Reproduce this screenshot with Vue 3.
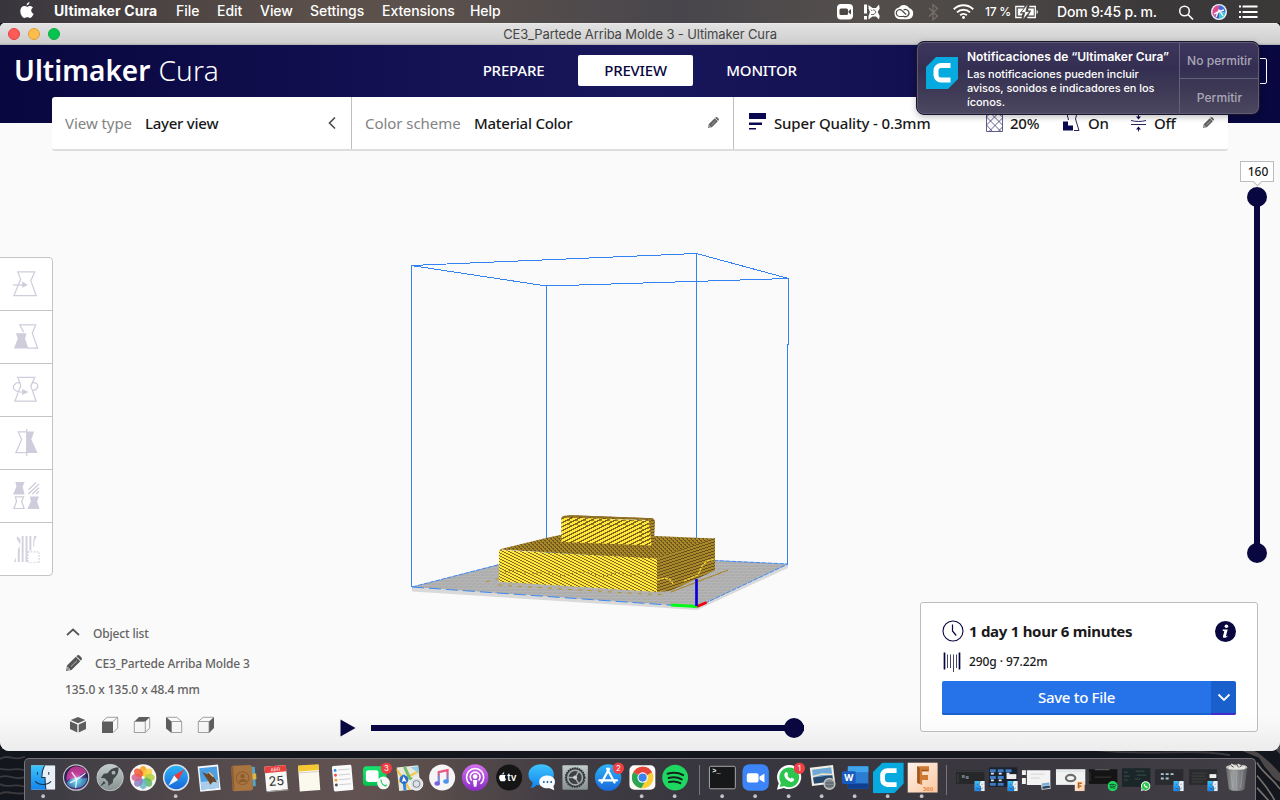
<script setup>
const menus = ['File', 'Edit', 'View', 'Settings', 'Extensions', 'Help']

const petals = ['#f9a11b', '#f8d13a', '#b5cf3c', '#5fb95c', '#6bb7c9', '#8c7fc4', '#d4608f', '#ee5a3b']

const previews = [
  { kind: 'dark', badge: 'finder' },
  { kind: 'grid', badge: 'finder' },
  { kind: 'doc', badge: 'photo' },
  { kind: 'ring', badge: 'fusion' },
  { kind: 'black', badge: 'spotify' },
  { kind: 'chat', badge: 'whatsapp' },
  { kind: 'icons', badge: 'finder' },
  { kind: 'list', badge: 'finder' },
]
</script>

<template>
  <div class="desktop">
    <svg class="defs" width="0" height="0">
      <defs>
        <linearGradient id="gBlue" x1="0" y1="0" x2="0" y2="1"><stop offset="0" stop-color="#3fc4fb" /><stop offset="1" stop-color="#1284ee" /></linearGradient>
        <linearGradient id="gSafari" x1="0" y1="0" x2="0" y2="1"><stop offset="0" stop-color="#2bb3f6" /><stop offset="1" stop-color="#1a68dc" /></linearGradient>
        <linearGradient id="gGreen" x1="0" y1="0" x2="0" y2="1"><stop offset="0" stop-color="#16e36f" /><stop offset="1" stop-color="#03c24f" /></linearGradient>
        <linearGradient id="gMusic" x1="0" y1="0" x2="0" y2="1"><stop offset="0" stop-color="#fb4d76" /><stop offset="1" stop-color="#3da5f2" /></linearGradient>
        <linearGradient id="gPod" x1="0" y1="0" x2="0" y2="1"><stop offset="0" stop-color="#d370ee" /><stop offset="1" stop-color="#8a2cc4" /></linearGradient>
        <linearGradient id="gSilver" x1="0" y1="0" x2="0" y2="1"><stop offset="0" stop-color="#c2cccb" /><stop offset="1" stop-color="#85908f" /></linearGradient>
        <linearGradient id="gFusion" x1="0" y1="0" x2="1" y2="1"><stop offset="0" stop-color="#fff3ea" /><stop offset="1" stop-color="#fbc7a1" /></linearGradient>
        <linearGradient id="gTrash" x1="0" y1="0" x2="1" y2="0"><stop offset="0" stop-color="#656769" /><stop offset=".35" stop-color="#a6a9aa" /><stop offset="1" stop-color="#5d5f61" /></linearGradient>
        <radialGradient id="gSiri" cx=".5" cy=".6" r=".6"><stop offset="0" stop-color="#fff" /><stop offset=".2" stop-color="#a9c4ef" /><stop offset=".5" stop-color="#5a3c8e" /><stop offset=".8" stop-color="#2b2156" /><stop offset="1" stop-color="#1b1538" /></radialGradient>
        <symbol id="finder" viewBox="0 0 26 26">
          <rect width="26" height="26" rx="1" fill="#e9eff6" />
          <path d="M0 0h14.5c-2 4-3 8-3 13h3.500c0 5 .5 9 1 13H0z" fill="url(#gBlue)" />
          <path d="M7 7v3M19 7v3M4.500 17c4.500 4.500 12.500 4.500 17 0M14.500 0c-2 4-3 8-3 13H15c0 5 .5 9 1 13" fill="none" stroke="#17304d" stroke-width="1.100" />
        </symbol>
        <symbol id="phone" viewBox="0 0 16 16"><path d="M4 2.500c1.500-1 2 .2 2.700 2 .4 1-.8 1.500-.4 2.300.7 1.300 1.600 2.200 3 2.800.8.300 1.300-1.100 2.300-.6 1.900.9 2.700 1.300 1.800 2.700C11.500 15 7.500 13 5 10.500S1.500 4.500 4 2.500z" fill="#fff" /></symbol>
        <symbol id="whatsapp" viewBox="0 0 28 28"><path d="M1 27l2-7A12.800 12.800 0 1 1 8.500 25z" fill="#fff" /><path d="M4 24l1.200-4.600A10.500 10.500 0 1 1 9 23z" fill="#2cc64f" /><use href="#phone" x="6.500" y="6" width="15" height="15" /></symbol>
        <symbol id="spotify" viewBox="0 0 28 28"><circle cx="14" cy="14" r="13.700" fill="#1ed760" /><path d="M6 10c6-1.800 11.500-1.200 16.500 1.400M7 14.500c5-1.400 10-.8 14 1.400M7.500 18.700c4.500-1.100 8.500-.6 12 1.300" fill="none" stroke="#12251b" stroke-width="2.100" stroke-linecap="round" /></symbol>
        <symbol id="fusion" viewBox="0 0 31 31"><rect width="31" height="31" fill="url(#gFusion)" /><path d="M10 4h12v5h-7v4h6v5h-6v5l-5-2z" fill="#cf7a33" /><path d="M10 4l2.500 2v16l-2.500-1zM15 9h7l-2-1.500h-6z" fill="#9c5420" /></symbol>
        <symbol id="photo" viewBox="0 0 26 26"><rect x="2" y="3" width="23" height="18" fill="#f2efe6" transform="rotate(-7 13 13)" /><rect x="4" y="5" width="19" height="8" fill="#6fa9d8" transform="rotate(-7 13 13)" /><path d="M4 14l19-2.500 1 6L5 20z" fill="#26496e" /><path d="M4 13l9-2.500 10 .5" stroke="#ece2c8" stroke-width="1.500" fill="none" /></symbol>
        <symbol id="cura" viewBox="0 0 32 32"><path d="M10 0h22v22L22 32H0V10z" fill="#06aadf" /><path d="M24.500 8.500H15a5 5 0 0 0-5 5v4.500a5 5 0 0 0 5 5h9.500" fill="none" stroke="#fff" stroke-width="5" /></symbol>
        <symbol id="pencil" viewBox="0 0 16 16"><path d="M0 16l1-5.500L9.800 1.700l4.500 4.500L5.500 15zM10.800.8c1-1 2-1 3 0l1.400 1.400c1 1 1 2 0 3l-.4.400-4.400-4.400z" /><path d="M1.600 12.200l2.400 2.300-2.200.5-.8-.8zM5 11.500l6-5.800" fill="none" stroke="#fff" stroke-width=".6" /></symbol>
        <symbol id="alert" viewBox="0 0 12 12"><circle cx="6" cy="6" r="5.800" fill="#ee3f44" /></symbol>
      </defs>
    </svg>

    <header class="menubar">
      <svg class="apple" width="14" height="17" viewBox="0 0 14 17"><path d="M9.500 0c.1 1.800-1.200 3.300-2.900 3.500C6.500 1.900 7.900.3 9.500 0zM6.900 4.700c.7 0 1.500-.8 2.900-.8 1.300 0 2.500.7 3.200 1.700-2.600 1.600-2.200 5 .6 6.200-.7 2-2 4.200-3.500 4.200-1.100 0-1.500-.7-2.800-.7s-1.800.7-2.800.7C2.300 16 .3 12.200.3 9.100.3 5.800 2.300 4 4.300 4c1.200 0 2 .7 2.600.7z" fill="#fff" /></svg>
      <strong>Ultimaker Cura</strong>
      <span v-for="m in menus" :key="m">{{ m }}</span>
      <div class="status">
        <svg class="tray" width="190" height="22" viewBox="832 0 190 22">
          <rect x="837" y="3" width="16" height="15.500" rx="4" fill="#fff" /><rect x="839.500" y="7.500" width="8.500" height="6.500" rx="1.500" fill="#4d4947" /><path d="M848.500 10l2.500-2v5.500l-2.500-2z" fill="#4d4947" />
          <path d="M864 3.500h3v9h-3zM864 15h3v3.500h-3zM868.500 4l4 3h3.500l3-3.500.7 4-2 3.500 2 4-.7 3.500-3-3h-3.500l-4 3v-3.500l1.500-4-1.500-3.500z" fill="#fff" /><path d="M871 8.500l1.500 2 1.500-2 2 2.500-2 2.500h-3" fill="none" stroke="#504a47" stroke-width=".8" /><circle cx="873" cy="10.800" r="1.200" fill="#fff" />
          <path d="M900 18.200a6 6 0 0 1-1-11.800 6.500 6.500 0 0 1 10.500.8 5.700 5.700 0 0 1-1.500 11z" fill="#fff" /><path d="M907.500 15.500h-7.800a3.400 3.400 0 1 1 2.400-5.800l4 3.800M903.300 15a3.600 3.600 0 1 0 .2-6" fill="none" stroke="#504a47" stroke-width="1.200" />
          <path d="M929 7l8.500 8-4.500 4V3.500l4.500 4-8.500 8" fill="none" stroke="#77716e" stroke-width="1.200" />
          <g fill="none" stroke="#fff" stroke-width="2"><path d="M953.800 8.200a13.800 13.800 0 0 1 19.400 0" /><path d="M957 11.400a9.300 9.300 0 0 1 13 0" /><path d="M960.200 14.300a4.700 4.700 0 0 1 6.600 0" /></g><circle cx="963.500" cy="16.500" r="1.400" fill="#fff" />
        </svg>
        <span class="pct">17&nbsp;%</span>
        <svg width="24" height="22" viewBox="1014.700 0 24 22"><path d="M1024 5.500h-8.500v11h6M1027 16.500h8v-11h-6" fill="none" stroke="#fff" stroke-width="1.300" /><path d="M1017.500 7.500h6l-4 5h3l-1 2h-4zM1028 7.500h5.500v7h-5.500l3-5h-3z" fill="#fff" /><path d="M1027.500 3l-7 8.500h4L1022.500 19l7-8.500h-4z" fill="#fff" stroke="#4a4644" stroke-width=".7" /><path d="M1036.300 9v4c1.700-.8 1.700-3.200 0-4z" fill="#fff" /></svg>
        <span class="clock">Dom 9:45 p. m.</span>
        <svg class="tail" width="88" height="22" viewBox="1176 0 88 22">
          <circle cx="1184.500" cy="10" r="4.800" fill="none" stroke="#fff" stroke-width="1.500" /><path d="M1188 13.500l5 5" stroke="#fff" stroke-width="1.700" />
          <circle cx="1219" cy="11" r="8" fill="#eef3fa" /><path d="M1219 4.300a6.700 6.700 0 0 0-5 11l5-4.300z" fill="#e04a8e" /><path d="M1219 4.300a6.700 6.700 0 0 1 6.500 7.500l-6.500-1z" fill="#3f6ddb" /><path d="M1219 11l6.500.8a6.700 6.700 0 0 1-6.500 5.900z" fill="#40c8d8" /><path d="M1219 11v6.700a6.700 6.700 0 0 1-5-2.400z" fill="#5a52bd" /><path d="M1214 13c3-2 6-3 10-4M1216 16l3-7 4 6" stroke="#fff" stroke-width="1.300" fill="none" />
          <path d="M1242.500 5.500h15M1242.500 11h15M1242.500 16h15" stroke="#fff" stroke-width="2" /><path d="M1239 5.500h2M1239 11h2M1239 16h2" stroke="#fff" stroke-width="2" />
        </svg>
      </div>
    </header>

    <main class="window">
      <div class="titlebar"><i class="red"></i><i class="yellow"></i><i class="green"></i><span>CE3_Partede Arriba Molde 3 - Ultimaker Cura</span></div>
      <nav class="brandbar">
        <div class="brand"><b>Ultimaker</b><span>Cura</span></div>
        <div class="tabs"><span>PREPARE</span><span class="on">PREVIEW</span><span>MONITOR</span></div>
        <div class="account"></div>
      </nav>

      <section class="toolbar">
        <div class="cell type">
          <span class="lab">View type</span><span class="val v1">Layer view</span>
          <svg width="10" height="14" viewBox="0 0 10 14"><path d="M8 1.500L2.500 7 8 12.500" fill="none" stroke="#4a4a4a" stroke-width="1.600" /></svg>
        </div>
        <div class="cell scheme">
          <span class="lab l2">Color scheme</span><span class="val v2">Material Color</span>
          <svg class="pen" width="11" height="11"><use href="#pencil" /></svg>
        </div>
        <div class="cell quality">
          <svg class="bars" width="17" height="17" viewBox="0 0 17 17"><path d="M0 0h17v6H0zM0 9.500h13V12H0zM0 15h7v1.500H0z" fill="#0a0850" /></svg>
          <span class="val v3">Super Quality - 0.3mm</span>
          <svg class="infill" width="17" height="19" viewBox="0 0 17 19"><path d="M.5 0v18.500h16V0M.5 12L12 .5M.5 4L4 .5M.5 4L15 18.500M5 .5L16.500 12M3 18.500L16.500 5M16.500 14L12 18.500M.5 12L6.500 18.500M12 .5L16.500 4" fill="none" stroke="#3a3870" stroke-width=".8" /></svg>
          <span class="val pctv">20%</span>
          <svg class="support" width="17" height="19" viewBox="0 0 17 19"><path d="M4.500 0v3l1 4M14 0l-1.500 6 3.500 11.500h-5M12.500 0l.8 2" fill="none" stroke="#26245e" stroke-width="1" /><path d="M0 8.500h5v4h5v5H0z" fill="#0a0850" /></svg>
          <span class="val onv">On</span>
          <svg class="adhesion" width="15" height="19" viewBox="0 0 15 19"><path d="M0 7.500c4 1.300 11 1.300 15 0M0 11.500h15M7.500 0v4M7.500 14v4.500" fill="none" stroke="#26245e" stroke-width="1" /><path d="M5 3.500h5L7.500 6.500zM5 16.500h5L7.500 13.500z" fill="#0a0850" /></svg>
          <span class="val">Off</span>
          <svg class="pen p2" width="11" height="11"><use href="#pencil" /></svg>
        </div>
      </section>

      <section class="stage">
        <svg class="scene" width="400" height="370" viewBox="400 245 400 370">
          <defs>
            <pattern id="front" width="6" height="3" patternUnits="userSpaceOnUse"><rect width="6" height="3" fill="#ffe83b" /><path d="M0 0h2v1H0zM2 1h2v1H2zM4 2h2v1H4z" fill="#8a6f22" /></pattern>
            <pattern id="block" width="8" height="4" patternUnits="userSpaceOnUse"><rect width="8" height="4" fill="#ffe83b" /><path d="M5 0h3v1H5zM3 1h3v1H3zM1 2h3v1H1zM0 3h2v1H0zM7 3h1v1H7z" fill="#80651d" /></pattern>
            <pattern id="chev" width="8" height="4" patternUnits="userSpaceOnUse"><path d="M0 0h2v1H0zM2 1h2v1H2zM4 1h2v1H4zM6 0h2v1H6z" fill="#80651d" /></pattern>
            <pattern id="side" width="9" height="3" patternUnits="userSpaceOnUse"><rect width="9" height="3" fill="#a9872b" /><path d="M6 0h3v1H6zM3 1h3v1H3zM0 2h3v1H0z" fill="#69511a" /></pattern>
            <pattern id="lid" width="4" height="4" patternUnits="userSpaceOnUse"><rect width="4" height="4" fill="#a9872b" /><path d="M0 0h2v1H0zM1 1h1v1H1zM2 2h2v1H2zM3 3h1v1H3z" fill="#70571a" /></pattern>
            <pattern id="mesh" width="5" height="3" patternUnits="userSpaceOnUse" patternTransform="skewX(-45)"><rect width="5" height="3" fill="#acacac" /><path d="M0 .5h5M.5 0v3" stroke="#b9b9b9" stroke-width=".7" /></pattern>
          </defs>
          <path d="M412 587l285 20 91-43v4l-91 42-285-18.500z" fill="#d9d9d9" />
          <path d="M412 587l134-35 242 12-91 43z" fill="url(#mesh)" />
          <path d="M412 587l134-34.500L788 564l-91 43" fill="none" stroke="#3d88f2" stroke-width="1" stroke-dasharray="5 1" />
          <path d="M412 587l285 20" fill="none" stroke="#3d88f2" stroke-width="1" stroke-dasharray="12 5" />
          <g fill="none" stroke="#3381f2" stroke-width="1" shape-rendering="crispEdges"><path d="M411 265.500L696.500 253.500 788.500 278.500 546.500 286zM411 265v35h.5v287M546.500 286v260M696.500 254v351M788.500 278v66l-1 0v220" /></g>
          <path d="M486 582l18-5M498 585l155 9.500h14M671 592l57-22" fill="none" stroke="#b8952a" stroke-width="1" stroke-dasharray="4 6" />
          <path d="M671 592l57-22" fill="none" stroke="#a8862a" stroke-width="1" />
          <path d="M499 549.500L546 538l14-3 95 1 60 2.500-58 20.500z" fill="url(#lid)" />
          <path d="M499 550l158 8.500v33.500l-158-10.300z" fill="url(#front)" />
          <path d="M657 558.500l58-20.500v32.500L670 591l-13 1z" fill="url(#side)" />
          <path d="M657 580c10-3 13-2 16 4M684 581l14-6 4-9 5-5 8-2" fill="none" stroke="#f5d637" stroke-width="1.300" stroke-dasharray="3 1" />
          <path d="M505 572c12-5 18 4 32 1s20 6 32 2 15-4 27 0 17-5 28-1 14-3 25 0" fill="none" stroke="#8b6e1c" stroke-width="1.500" stroke-dasharray="1 3" />
          <path d="M561 518l3-2.200 9-.6 80 3 2 2.300-1 24.500-5 0v-25z" fill="url(#side)" />
          <path d="M561.300 517.500L649 520.500l2.500 25-90.200-3.500z" fill="url(#block)" /><path d="M563 518h86v8h-86zM640 522h9v22h-9z" fill="url(#chev)" opacity=".75" />
          <path d="M562 517.500l8-1.500 83 3" fill="none" stroke="#8d6e22" stroke-width="1.500" />
          <path d="M671 605l26 1.500" stroke="#00fb18" stroke-width="3" /><path d="M697 606.500l9.500-4" stroke="#f4000b" stroke-width="2.500" /><path d="M696.500 579v27" stroke="#0600e0" stroke-width="2.700" />
        </svg>

        <aside class="tools">
          <div><svg viewBox="0 0 28 28"><path class="o" d="M5 2h17.500l-4 9 5.500 15.500H1L6.500 13 8 10 5 2z" /><path class="o" d="M0 15.500h10" /><path d="M9.500 12l6 3.500-6 3z" /></svg></div>
          <div><svg viewBox="0 0 28 28"><path class="o" d="M11 9.500L7 2h16.500l-3.500 8.500L25.500 26H15" /><path d="M3 10.500h11L12.500 16l3.500 10.500H1L5 16z" /></svg></div>
          <div><svg viewBox="0 0 28 28"><path class="o" d="M5 1.500h17.500l-4 9L24 26H2L7 13 8 10 5 1.500zM8 7.500c-5-2-9 3-7 6 2 3 6 3.200 9 3.200M21 15c5-1 6-6 3-7.500-2-1-4-.5-5 1" /><path d="M9.500 13.500l6.500 3.200-6.500 3z" /></svg></div>
          <div><svg viewBox="0 0 28 28"><path class="o" d="M14 3H5.500L9 11 3 24.500h11M14.300 0v28" /><path d="M14 2.500h8l-3 8.500 6.500 14H14z" /></svg></div>
          <div><svg viewBox="0 0 28 28"><path d="M2.500 0h9.500l-2 5 2 8H0L3.500 5zM17.500 15h9.500l-2 5 2.500 8H15l3.500-8z" /><path class="o" d="M2.500 15.500h8.500l-2 4.500 2.500 7.500H1L3.700 20zM16 8l8-7.500M16 12.500L27 2M20 12.500l7-6.500M24 12.500l3-3" /></svg></div>
          <div><svg viewBox="0 0 28 28"><path d="M4 0l3.500 3v6L4 3zM9 0h2v27H9zM13 0h2v27h-2zM17 0h2v15h-2zM22 0h2.500L22 6v5h-1V6zM5 14l2-4v17H5zM1 27l2-5v5z" opacity=".9" /><path class="o" stroke-dasharray="1.500 1.500" d="M15.500 16.500h11.500V28H15.500z" /></svg></div>
        </aside>

        <div class="layers"><output>160</output><div class="vtrack"><i></i><i></i></div></div>

        <div class="objects">
          <div class="row r1"><svg width="14" height="8" viewBox="0 0 14 8"><path d="M1 7l6-5.500L13 7" fill="none" stroke="#555" stroke-width="1.700" /></svg><span>Object list</span></div>
          <div class="row r2"><svg width="16" height="16" fill="#555"><use href="#pencil" /></svg><span>CE3_Partede Arriba Molde 3</span></div>
          <div class="row r3"><span>135.0 x 135.0 x 48.4 mm</span></div>
          <div class="views">
            <svg viewBox="0 0 18 18"><path d="M9 1l7.300 3L9 7.300 1.700 4zM1 5.300l7.300 3.200v8L1 13zM17 5.300L9.700 8.500v8L17 13z" /></svg>
            <svg viewBox="0 0 18 18"><path d="M1 5.500h11V17H1z" /><path class="l" d="M1.300 5.500L6 1.300h10.700V12l-4.500 4.500M12 5.500l4.500-4.200" /></svg>
            <svg viewBox="0 0 18 18"><path d="M1.500 5.500L6 1h11l-4.700 4.500z" /><path class="l" d="M1.300 5.500h11v11h-11zM16.700 1.300V12l-4.400 4.500" /></svg>
            <svg viewBox="0 0 18 18"><path d="M1 1l5.500 4.500V17L1 12.500z" /><path class="l" d="M1.300 1.300h10.500l4.900 4.200v11H6.500v-11h10.200" /></svg>
            <svg viewBox="0 0 18 18"><path d="M12 5.500L17 1v11l-5 5z" /><path class="l" d="M1.300 5.500h10.700v11H1.300zM1.300 5.500L6 1.300h10.700" /></svg>
          </div>
        </div>

        <div class="play"><svg width="16" height="18" viewBox="0 0 16 18"><path d="M.5.5L15.500 9 .5 17.500z" fill="#08073f" /></svg><div class="htrack"><i></i></div></div>

        <section class="card">
          <div class="time"><svg width="22" height="22" viewBox="0 0 22 22"><circle cx="11" cy="11" r="10" fill="none" stroke="#08073f" stroke-width="1.100" /><path d="M10.500 4.500V11l3.700 4.500" fill="none" stroke="#08073f" stroke-width="1.200" /></svg><strong>1 day 1 hour 6 minutes</strong>
            <svg class="info" width="21" height="21" viewBox="0 0 21 21"><circle cx="10.500" cy="10.500" r="10.500" fill="#08073f" /><circle cx="11.400" cy="5.300" r="1.800" fill="#fff" /><path d="M7.800 8.500h4.900l-1.600 6c-.2.900.6.900 1.700.2-.9 2.300-5.700 3-4.800.2l1.300-4.700-1.700-.5z" fill="#fff" /></svg></div>
          <div class="mat"><svg width="18" height="20" viewBox="0 0 18 20"><path d="M1.500.5v17M16.500.5v17" stroke="#08073f" stroke-width="1.700" /><path d="M4.500 2.500V16M7.500 2.500V16M10.500 2.500V20M13.500 2.500V16" stroke="#08073f" stroke-width="1" opacity=".75" /></svg><span>290g · 97.22m</span></div>
          <div class="save"><button>Save to File</button><button class="more"><svg width="14" height="9" viewBox="0 0 14 9"><path d="M1.500 1.500L7 7l5.500-5.500" fill="none" stroke="#fff" stroke-width="1.800" /></svg></button></div>
        </section>
      </section>
    </main>

    <section class="toast">
      <svg class="logo" width="32" height="32"><use href="#cura" /></svg>
      <div class="msg"><strong>Notificaciones de “Ultimaker Cura”</strong><p>Las notificaciones pueden incluir<br />avisos, sonidos e indicadores en los<br />íconos.</p></div>
      <div class="acts"><span>No permitir</span><span>Permitir</span></div>
    </section>

    <footer class="ground">
      <svg class="wall" width="1280" height="49" viewBox="0 0 1280 49" preserveAspectRatio="none">
        <rect width="1280" height="49" fill="#14161d" />
        <g fill="none" stroke="#4b4a4e" opacity=".7"><path d="M0 14c9-5 14 3 25-2M0 22c9 3 18-2 26 2M0 29c10-3 15 4 25 0M0 35c8 4 18-2 26 3M0 43c8-4 16 2 26-1M40 4c40-5 90 6 140 0s120-2 160 2M330 5c30-5 70 4 110 1s60-6 120-1M590 5c20-3 50 4 90-1s90 4 130 0M850 3c40 6 80-2 120 2s80-3 130 2 90-2 130 4" stroke-width="1.500" /></g>
        <path d="M1130 3c45-2 70 6 105 2l24 8 6 8c6 5 8 10 15 12v-7c-7-7-14-12-22-17l-20-8h28c5 2 9 5 14 9V0h-90z" fill="#6a6461" opacity=".65" /><path d="M1257 17c5 8 13 11 23 22M1257 28c5 5 11 10 18 21M1257 38l12 11" stroke="#77716d" stroke-width="1.500" fill="none" />
      </svg>
      <div class="dock">
        <svg viewBox="0 0 34 42"><use href="#finder" x="4" y="6" width="25" height="25" /><circle class="d" cx="16.500" cy="37.500" r="1.900" /></svg>
        <svg viewBox="0 0 34 42"><circle cx="16.500" cy="18.500" r="13.500" fill="#c3c5cc" /><circle cx="16.500" cy="18.500" r="12.300" fill="url(#gSiri)" /><path d="M7 22c3-4 6-2 9-3s6-6 11-5c0-3-4-7-10-7S6 12 7 22z" fill="#e0409c" opacity=".75" /><path d="M7 24c3-5 7-4 10-4s6-1 11-1c-1 6-5 10-11 10s-9-2-10-5z" fill="#3cc7dd" opacity=".6" /><path d="M10 24l8-4 8-6M16 29l1-9-5-7" fill="none" stroke="#fff" stroke-width="1.300" opacity=".85" /></svg>
        <svg viewBox="0 0 34 42"><circle cx="16.500" cy="18.500" r="13.500" fill="url(#gSilver)" stroke="#c7cfce" stroke-width=".8" /><path d="M25 8c-5 .2-8 2-11 6l-4 .6-3 4.400 4 .3 3.500 3.700.2 4.200 4.500-3.300.5-4C24 16.500 25.500 13 25 8zM10 22l-4 6 6-4z" fill="#42474a" /><circle cx="20" cy="13.500" r="2" fill="#a7b0af" /></svg>
        <svg viewBox="0 0 34 42"><circle cx="16.500" cy="18.500" r="13.500" fill="#f5f5f3" /><ellipse v-for="(c, i) in petals" :key="c" cx="16.500" cy="11.800" rx="3.900" ry="5.200" :fill="c" opacity=".85" :transform="`rotate(${i * 45} 16.500 18.500)`" /></svg>
        <svg viewBox="0 0 34 42"><circle cx="16.500" cy="18.500" r="13.500" fill="#e3e5e8" /><circle cx="16.500" cy="18.500" r="12" fill="url(#gSafari)" /><path d="M25 10l-6.500 11-4-4.500z" fill="#f03a31" /><path d="M8.500 27l6-10.500 4 4.500z" fill="#f5f5f5" /><circle class="d" cx="16" cy="37.500" r="1.900" /></svg>
        <svg viewBox="0 0 34 42"><g transform="rotate(-6 17 19)"><path d="M6 6h21v26H6z" fill="#f3f6fa" /><path d="M7.500 8h18v22h-18z" fill="#4c9fe2" /><path d="M7.500 22h18v8h-18z" fill="#a9cdeb" /><path d="M10 12l5 3 3-2 3 5 3 6-4-1-3 3-2-5z" fill="#6b4528" /><path d="M17 13l4 5" stroke="#d9c098" stroke-width="1.600" /></g></svg>
        <svg viewBox="0 0 34 42"><g transform="rotate(-3 17 19)"><path d="M25 8h4v20h-3z" fill="#52a7c9" /><path d="M26 15h4v6h-4z" fill="#e5b33e" /><rect x="5" y="6" width="21" height="26" rx="2" fill="#a87541" /><path d="M6 7v24" stroke="#8d5e31" stroke-width="2" /><circle cx="16" cy="19" r="6.500" fill="none" stroke="#8c5c2d" /><circle cx="16" cy="17" r="2.200" fill="#8c5c2d" /><path d="M11.500 23c1-4 8-4 9 0z" fill="#8c5c2d" /></g></svg>
        <svg viewBox="0 0 34 42"><g transform="rotate(-5 17 19)"><rect x="5.500" y="6.500" width="22" height="25" fill="#f7f7f5" /><path d="M5.500 6.500h22V13h-22z" fill="#e8423f" /><path d="M6 32h22" stroke="#a9a9a8" /><text x="16.500" y="11.800" class="mon">ABR</text><text x="16.500" y="26.500" class="day">25</text></g></svg>
        <svg viewBox="0 0 34 42"><g transform="rotate(-4 17 19)"><rect x="6" y="6" width="21" height="26" fill="#fbf9ee" /><path d="M6 5.500h21v6H6z" fill="#f6c735" /><path d="M6 13h21" stroke="#cac6ba" stroke-width=".8" /></g></svg>
        <svg viewBox="0 0 34 42"><g transform="rotate(-5 17 19)"><rect x="7" y="6" width="20" height="26" rx="1.500" fill="#fafafa" /><path d="M13 10.500h12M13 15.500h12M13 20.500h12M13 25.500h12" stroke="#cfd0d2" /><g><circle cx="10" cy="10.500" r="1.500" fill="#2d8bf1" /><circle cx="10" cy="15.500" r="1.500" fill="#ef4c3f" /><circle cx="10" cy="20.500" r="1.500" fill="#f49a2a" /><circle cx="10" cy="25.500" r="1.500" fill="#4d525b" /></g></g></svg>
        <svg viewBox="0 0 34 42"><rect x="3" y="7" width="24" height="20" rx="4" fill="url(#gGreen)" /><rect x="6" y="11" width="13" height="12" rx="2.500" fill="#fff" /><circle cx="24" cy="24" r="6.500" fill="#f7f7f7" /><path d="M21 20.500c2-.5 1 2 1.500 3s2 2.500 3 2.500 2-1 2 .5c-1 3-7-1-6.500-6z" fill="#20c958" /><use href="#alert" x="21" y="3" width="12" height="12" /><text class="bd" x="27" y="12">3</text></svg>
        <svg viewBox="0 0 34 42"><g transform="rotate(-6 17 19)"><rect x="5" y="7" width="22" height="24" fill="#e9e8dc" /><path d="M5 9l11 22M5 22l22-9" stroke="#f2c644" stroke-width="2" /><path d="M13 7l4 12 10 6" stroke="#73bd68" stroke-width="3" fill="none" /><path d="M11 15v16" stroke="#3388dd" stroke-width="3" /><path d="M19 8h8v7z" fill="#8fd0ed" /><circle cx="11" cy="20" r="4.500" fill="#2a70ca" /><path d="M11 16.500l2.500 6-2.500-1.200-2.500 1.200z" fill="#fff" /></g><circle cx="24" cy="25" r="6.500" fill="#dce2e7" stroke="#f8f8f8" /><circle cx="24" cy="25" r="3.500" fill="none" stroke="#7e8791" /></svg>
        <svg viewBox="0 0 34 42"><circle cx="16.500" cy="18.500" r="13.300" fill="#f5f5f8" /><path d="M13 24V13l9-2v11" fill="none" stroke="url(#gMusic)" stroke-width="2.300" /><ellipse cx="11.500" cy="24.500" rx="2.800" ry="2.300" fill="#7b63dd" /><ellipse cx="20.500" cy="22.500" rx="2.800" ry="2.300" fill="#4e92ec" /></svg>
        <svg viewBox="0 0 34 42"><circle cx="16.500" cy="18.500" r="13.500" fill="url(#gPod)" /><g fill="none" stroke="#fff" stroke-width="1.600"><path d="M11 25a8.800 8.800 0 1 1 11 0M13 21.500a5 5 0 1 1 7 0" /></g><circle cx="16.500" cy="17.500" r="2.400" fill="#fff" /><path d="M14.200 21h4.600l-1 7h-2.600z" fill="#fff" /></svg>
        <svg viewBox="0 0 34 42"><circle cx="16.500" cy="18.500" r="13.300" fill="#151516" /><path d="M11.500 13c.1 1.200-.9 2-2 2.200.1-1.200 1-2 2-2.200zm-1.800 3c.8 0 2-.8 3.300.5-1.200 1-1 2.700.3 3.500-.5 1.400-1.400 2.500-2.200 2.400-1-.3-1.600-.3-2.300 0C7.500 22.500 6 20 6.300 18c.3-2 2-2.700 3.400-2z" fill="#fff" /><text class="tv" x="14.500" y="22.300">tv</text></svg>
        <svg viewBox="0 0 34 42"><path d="M15.500 5C8 5 2.500 9.500 2.500 15.500c0 3.300 1.500 6 4.300 8 0 2-1 4-2.300 5.500 3 0 5-1.500 6.500-3 9 1.500 17.500-3 17.500-10.500C28.500 9.500 23 5 15.500 5z" fill="url(#gBlue)" /><path d="M22 16.500c-5 0-8.500 2.700-8.500 6.500s3.500 6.500 8.500 6.500h2l5 2-1-4c4-5 .5-11-6-11z" fill="#f8fafc" /><path d="M17.500 23h1.500M21.200 23h1.500M25 23h1.500" stroke="#1f5fae" stroke-width="2.200" /></svg>
        <svg viewBox="0 0 34 42"><rect x="3.500" y="6" width="26" height="25" rx="1" fill="url(#gSilver)" /><circle cx="16.500" cy="18.500" r="9.800" fill="#3d4144" stroke="#2e3133" stroke-width="1.500" stroke-dasharray="1.500 1" /><circle cx="16.500" cy="18.500" r="7.500" fill="none" stroke="#a5aaad" stroke-width="1.600" /><path d="M16.500 18.500H9M16.500 18.500l3.800-6.500M16.500 18.500l3.800 6.500" stroke="#a5aaad" stroke-width="1.500" /><circle cx="16.500" cy="18.500" r="2" fill="#ccd0d2" /></svg>
        <svg viewBox="0 0 34 42"><circle cx="16.500" cy="18.500" r="13.500" fill="url(#gSafari)" /><path d="M15.500 9.500l7.500 14M17.500 9.500l-7.500 14M7.500 21.500h18" stroke="#fff" stroke-width="2.300" stroke-linecap="round" /><use href="#alert" x="21" y="3" width="12" height="12" /><text class="bd" x="27" y="12">2</text></svg>
        <svg viewBox="0 0 34 42"><rect x="3.500" y="6" width="26.500" height="25" rx="5" fill="#fafafa" /><circle cx="17" cy="18.500" r="11" fill="#f8cf35" /><path d="M17 18.500L7.500 13a11 11 0 0 1 19 0z" fill="#e8443b" /><path d="M17 7.500a11 11 0 0 1 9.500 5.500H17z" fill="#e8443b" /><path d="M7.500 13a11 11 0 0 0 8 16.400l5-8.700-4-2.200z" fill="#2ba555" /><circle cx="17" cy="18.500" r="5.300" fill="#fff" /><circle cx="17" cy="18.500" r="4.200" fill="#3b82ed" /><circle class="d" cx="16" cy="37.500" r="1.900" /></svg>
        <svg viewBox="0 0 34 42"><use href="#spotify" x="3" y="5" width="27" height="27" /><circle class="d" cx="16" cy="37.500" r="1.900" /></svg>
        <i class="sep s1"></i>
        <svg viewBox="0 0 34 42"><rect x="3.500" y="7" width="26.500" height="23" rx="1.500" fill="#17181a" stroke="#aaa" stroke-width="1" /><text x="6.500" y="14" class="term">&gt;_</text><circle class="d" cx="16.500" cy="37.500" r="1.900" /></svg>
        <svg viewBox="0 0 34 42"><rect x="3.500" y="5" width="27" height="27" rx="7" fill="#3c84f7" /><rect x="8" y="14" width="12" height="9.500" rx="2" fill="#fff" /><path d="M21 17.500l5-3v9l-5-3z" fill="#fff" /><circle class="d" cx="16.500" cy="37.500" r="1.900" /></svg>
        <svg viewBox="0 0 34 42"><use href="#whatsapp" x="3" y="5" width="27" height="27" /><use href="#alert" x="21" y="3" width="12" height="12" /><text class="bd" x="27" y="12">1</text><circle class="d" cx="16" cy="37.500" r="1.900" /></svg>
        <svg viewBox="0 0 34 42"><use href="#photo" x="3" y="4" width="27" height="27" /><circle cx="24" cy="25" r="5.500" fill="#7e8a8f" stroke="#c8c4bb" stroke-width="1.500" /><path d="M20 24h8M20 27h8" stroke="#4e5a66" /><circle class="d" cx="16" cy="37.500" r="1.900" /></svg>
        <svg viewBox="0 0 34 42"><rect x="9" y="7" width="21" height="23" rx="1.500" fill="#2b7cd3" /><path d="M9 7h21v6H9z" fill="#41a5ee" /><path d="M9 24.500h21V30H9z" fill="#103f91" /><rect x="3" y="12" width="14" height="13" rx="1.500" fill="#185abd" /><text x="10" y="22" class="wd">W</text><circle class="d" cx="16" cy="37.500" r="1.900" /></svg>
        <svg viewBox="0 0 34 42"><use href="#cura" x="1" y="3" width="31.500" height="31.500" /><circle class="d" cx="16" cy="37.500" r="1.900" /></svg>
        <svg viewBox="0 0 34 42"><use href="#fusion" x="1.500" y="3" width="31" height="31" /><text x="22.500" y="32" class="f360">360</text><circle class="d" cx="16" cy="37.500" r="1.900" /></svg>
        <i class="sep s2"></i>
        <svg v-for="(p, i) in previews" :key="i" viewBox="0 0 34 42">
          <template v-if="p.kind === 'dark'"><path d="M2 11h29v14H2z" fill="#252729" /><path d="M2 12h29M4 15v9" stroke="#42464a" /><path d="M8 16h3v3H8zM12 17h3v3h-3z" fill="#6c7780" /></template>
          <template v-else-if="p.kind === 'grid'"><path d="M2 8h29v20H2z" fill="#1a2230" /><g fill="#3e7cc4"><path d="M3 10h6v3H3zM11 10h6v3h-6zM19 10h6v3h-6zM3 17h6v3H3zM11 17h6v3h-6zM3 24h6v3H3zM11 24h6v3h-6z" /></g><path d="M4 14.500h3M12 14.500h3M20 14.500h3M4 21.500h3M12 21.500h3" stroke="#e5ebf2" stroke-width="1.800" /><path d="M20 15h10v5H20z" fill="#eee" /></template>
          <template v-else-if="p.kind === 'doc'"><path d="M2 11h4v5H2zM2 19h4v6H2zM7 11h24v15H7z" fill="#f3f3f3" /><path d="M11 15h14M11 19h9" stroke="#d5d5d5" /></template>
          <template v-else-if="p.kind === 'ring'"><path d="M2 10h30v16H2z" fill="#f1f3f3" /><path d="M2 12h30" stroke="#d5dce0" /><ellipse cx="17" cy="19" rx="4.800" ry="3.200" fill="none" stroke="#6e6e6e" stroke-width="2.300" /></template>
          <template v-else-if="p.kind === 'black'"><path d="M2 10h29v15H2z" fill="#141414" /><path d="M8 10.500h15" stroke="#888" stroke-width=".7" /><path d="M3 13v9M8 18h17" stroke="#34302e" stroke-width="1.200" /></template>
          <template v-else-if="p.kind === 'chat'"><path d="M2 9h29v19H2z" fill="#1a2628" /><path d="M4 13h4M4 17h6M4 21h4M16 12h9M17 16h10M15 20h6" stroke="#3b504e" /></template>
          <template v-else-if="p.kind === 'icons'"><path d="M2 10h29v16H2z" fill="#292b2e" /><path d="M8 14h3v2H8zM13 14h3v2h-3zM18 14h3v2h-3zM8 18.500h3v2H8zM13 18.500h3v2h-3z" fill="#adc9d8" /></template>
          <template v-else><path d="M2 10h29v16H2z" fill="#292b2d" /><path d="M5 14h15M5 17h14M5 20h15M5 23h12" stroke="#46494c" stroke-width=".8" /><path d="M23 15h7v4h-7z" fill="#eee" /></template>
          <use :href="'#' + p.badge" x="21" y="22" width="10.500" height="10.500" />
        </svg>
        <svg viewBox="0 0 34 42"><path d="M6 8h22l-3 22c-1 3-15 3-16 0z" fill="url(#gTrash)" opacity=".9" /><ellipse cx="17" cy="8" rx="11" ry="2.800" fill="#c3c3bf" /><path d="M9 8l3-4 4 3 3-3 3 4 4-2-1 4H9z" fill="#e7e7e2" /><path d="M11 6l3 2M17 5l2 3M22 6l-2 2" stroke="#48443f" /><path d="M11 12l2 17M17 12v18M23 12l-2 17" stroke="#c4c6c6" stroke-width=".6" opacity=".6" /></svg>
      </div>
    </footer>
  </div>
</template>

<style>
html, body { margin: 0; overflow: hidden; }
</style>

<style scoped>
* { box-sizing: border-box; }
.desktop { position: relative; width: 1280px; height: 800px; overflow: hidden; background: #14161d; font-family: "Noto Sans", "Open Sans", sans-serif; display: flex; flex-direction: column; }
.defs { position: absolute; }
.menubar { height: 23px; flex: none; padding-left: 20px; display: grid; grid-template-columns: 34px 122px 41px 43px 50px 72px 88px 60px 1fr; align-items: center; font: 500 14px/22px Inter, sans-serif; letter-spacing: -.05px; color: #fff; background: linear-gradient(90deg, #38363c 0, #4b4343 150px, #5c504a 330px, #5b514c 430px, #48464c 680px, #544f4c 860px, #4a4644 1010px, #3b383a 1150px, #3b3838 1280px); white-space: nowrap; }
.menubar > * { position: relative; bottom: 1px; }
.menubar strong { font-weight: 700; letter-spacing: .1px; }
.menubar .apple { bottom: 1px; }
.status { display: flex; align-items: center; height: 22px; justify-self: end; width: 448px; }
.menubar .status { bottom: 0; }
.tray { margin-right: -37px; flex: none; }
.pct { font-size: 12px; width: 30px; flex: none; letter-spacing: -.3px; }
.clock { width: 119px; margin-left: 18px; font-size: 14px; letter-spacing: -.2px; flex: none; line-height: 20px; }
.status svg { flex: none; }
.window { height: 728px; flex: none; overflow: hidden; border-radius: 5px 5px 9px 9px; background: #fafafa; display: flex; flex-direction: column; z-index: 1; }
.titlebar { height: 22px; flex: none; background: linear-gradient(#f2f2f2 0, #e2e2e2 1px, #cfcfcf 20px, #aaa 22px); display: flex; align-items: center; padding-left: 8px; gap: 8px; }
.titlebar i { width: 12px; height: 12px; border-radius: 50%; border: 1px solid #e0443e; background: #fc5b57; }
.titlebar .yellow { background: #fdbc4e; border-color: #dea03a; }
.titlebar .green { background: #05c450; border-color: #14a946; }
.titlebar span { width: 1152px; text-align: center; color: #454545; font: 400 13px/20px Inter, sans-serif; letter-spacing: -.13px; margin-left: -4px; }
.brandbar { height: 78px; flex: none; background: linear-gradient(90deg, #08073f, #19175c 50%, #08073f); display: grid; grid-template-columns: 456px 363px 1fr; align-items: start; color: #fff; }
.brand { padding: 5px 0 0 14px; font-size: 28px; line-height: 40px; display: flex; gap: 8px; white-space: nowrap; }
.brand b { font-weight: 600; letter-spacing: 0; }
.brand span { font-weight: 300; letter-spacing: .25px; }
.tabs { display: flex; padding-top: 10px; }
.tabs span { flex: none; width: 115px; height: 31px; font-size: 15px; font-weight: 500; line-height: 31px; text-align: center; letter-spacing: -.2px; }
.tabs .on { margin: 0 11px 0 7px; background: #fff; color: #08073f; border-radius: 2px; }
.account { width: 110px; height: 26px; margin: 13px 13px 0 auto; border: 1px solid #fff; border-radius: 2px; }
.toolbar { height: 54px; flex: none; margin: -26px 52px 0; background: #fff; border-radius: 3px; border-bottom: 2px solid #ddd; display: grid; grid-template-columns: 300px 382px 1fr; z-index: 1; }
.cell { display: flex; align-items: center; padding: 0 14px 0 13px; color: #1c1c1e; font-size: 15px; white-space: nowrap; border-right: 1px solid #c0c0c0; }
.quality { border: 0; }
.lab { color: #838383; width: 80px; letter-spacing: -.05px; }
.l2 { width: 109px; }
.val { font-weight: 550; color: #191919; letter-spacing: -.25px; }
.pctv { width: 30px; }
.onv { width: 22px; }
.type svg, .scheme svg { margin-left: auto; margin-top: -1px; }
.pen { fill: #606060; }
.quality .bars { margin: -3px 8px 0 2px; }
.v3 { width: 212px; letter-spacing: -.15px; }
.infill { margin: -2px 7px 0 0; width: 17px; }
.support { margin: -2px 8px 0 23px; }
.adhesion { margin: -2px 8px 0 21px; }
.p2 { margin-left: auto; margin-top: -2px; }
.stage { flex: 1; position: relative; background: linear-gradient(transparent 565px, #ececec 600px); }
.scene { position: absolute; left: 400px; top: 94px; }
.tools { position: absolute; left: -1px; top: 106px; width: 54px; height: 319px; background: #fff; border: 1px solid #c4c4c4; border-radius: 0 4px 4px 0; display: grid; grid-template-rows: repeat(6, 53px); }
.tools div { border-bottom: 1px solid #c4c4c4; display: grid; place-items: center; }
.tools div:last-child { border: 0; }
.tools svg { width: 27px; height: 27px; fill: #cfccdc; margin-top: -1px; }
.tools .o { fill: none; stroke: #cfccdc; stroke-width: 1.300; }
.layers { position: absolute; left: 1240px; top: 10px; width: 34px; display: flex; flex-direction: column; align-items: center; }
.layers output { width: 34px; height: 21px; border: 1px solid #bdbdbd; background: #fff; font-size: 12px; font-weight: 550; line-height: 19px; text-align: center; color: #191919; position: relative; padding-left: 2px; }
.layers output::after { content: ""; position: absolute; left: 13px; bottom: -4px; width: 6px; height: 6px; background: #fff; border: solid #bdbdbd; border-width: 0 1px 1px 0; transform: rotate(45deg); }
.vtrack { margin-top: 5px; height: 376px; width: 6px; background: linear-gradient(transparent 5px, #08073f 5px, #08073f 370px, transparent 370px); display: flex; flex-direction: column; justify-content: space-between; align-items: center; }
.vtrack i, .htrack i { width: 20px; height: 20px; border-radius: 50%; background: #08073f; flex: none; }
.objects { position: absolute; left: 65px; top: 469px; font-size: 12px; font-weight: 550; color: #636363; display: flex; flex-direction: column; white-space: nowrap; letter-spacing: -.17px; }
.row { display: flex; align-items: center; }
.r1 { height: 26px; padding-left: 1px; gap: 13px; }
.r1 svg { margin-top: -3px; }
.r2 { height: 34px; gap: 13px; padding-left: 1px; }
.r3 { height: 18px; letter-spacing: -.08px; }
.views { margin: 18px 0 0 4px; display: flex; gap: 14px; }
.views svg { width: 18px; height: 18px; fill: #5d5d5d; }
.views .l { fill: none; stroke: #8a8a8a; stroke-width: .8; }
.play { position: absolute; left: 340px; top: 567px; display: flex; align-items: center; gap: 15px; }
.htrack { width: 432.500px; height: 20px; display: flex; justify-content: flex-end; background: linear-gradient(transparent 7px, #08073f 7px, #08073f 13px, transparent 13px); border-radius: 3px; }
.card { position: absolute; left: 920px; top: 451px; width: 338px; height: 130px; border: 1px solid #bdbdbd; border-radius: 3px; background: linear-gradient(#fff 110px, #fafafa); padding: 17px 21px; color: #191919; }
.time { display: flex; align-items: center; gap: 5px; height: 22px; font-size: 15px; white-space: nowrap; }
.time strong { font-weight: 700; letter-spacing: -.28px; }
.info { margin-left: auto; }
.mat { display: flex; align-items: center; gap: 8px; margin: 9px 0 0 1px; height: 21px; font-size: 12px; font-weight: 550; letter-spacing: -.08px; }
.save { margin-top: 9px; height: 34px; display: grid; grid-template-columns: 1fr 25px; border-radius: 2px; overflow: hidden; }
.save button { border: 0; border-bottom: 2px solid #1a5fce; padding: 0; background: #2672e9; color: #fff; font: 550 15px "Noto Sans", sans-serif; letter-spacing: -.3px; }
.save .more { background: #1a60cd; border-bottom-color: #452bcb; display: grid; place-items: center; }
.toast { position: absolute; left: 916px; top: 41px; width: 344px; height: 74px; z-index: 3; border-radius: 8px; border: 1px solid #17142c; background: linear-gradient(#3d375e, #342f52 35%, #3d3955 65%, #4c4860); box-shadow: inset 0 0 0 1px #5f5a75, 0 2px 6px rgba(0, 0, 0, .25); display: grid; grid-template-columns: 50px 212px 1fr; color: #fff; font-family: Inter, sans-serif; white-space: nowrap; }
.logo { margin: 15px 0 0 9px; }
.msg strong { display: block; font-weight: 600; font-size: 12px; line-height: 16px; padding-top: 7px; letter-spacing: -.03px; }
.msg p { margin: 2px 0 0; font-size: 11px; font-weight: 500; line-height: 14px; letter-spacing: -.05px; }
.acts { display: grid; grid-template-rows: 36px 1fr; border-left: 1px solid #646077; font-size: 12px; font-weight: 500; color: #aaa7b8; text-align: center; margin: 1px 0; letter-spacing: .05px; }
.acts span { display: grid; place-items: center; }
.acts span:first-child { border-bottom: 1px solid #646077; }
.acts span:last-child { padding-top: 3px; }
.ground { flex: 1; position: relative; margin-top: -10px; padding-top: 17px; }
.wall { position: absolute; left: 0; bottom: 0; height: 59px; }
.dock { position: relative; width: 1232px; height: 43px; margin-left: 24px; border: 1px solid #77747a; border-bottom: 0; border-radius: 5px 5px 0 0; background: linear-gradient(90deg, #3b3b43, #53494b 180px, #625352 330px, #594d4c 410px, #403c43 540px, #38363e 680px, #3a373f 960px, #423e46); display: flex; padding-left: 2.100px; }
.dock > svg { width: 33.250px; height: 42px; flex: none; overflow: visible; }
.sep { width: 1px; height: 30px; background: #77757b; margin: 6px 6px 0 7px; flex: none; }
.s2 { margin: 6px 7px 0; }
.d { fill: #c5c3c7; }
text { font-family: Inter, sans-serif; fill: #fff; }
.mon { font-size: 4.800px; text-anchor: middle; }
.day { font-size: 13px; text-anchor: middle; fill: #303030; }
.bd { font-size: 8px; text-anchor: middle; }
.tv { font-size: 10px; font-weight: 600; }
.term { font-size: 7px; font-family: "Liberation Mono", monospace; font-weight: 700; }
.wd { font-size: 9.500px; font-weight: 700; text-anchor: middle; }
.f360 { font-size: 5.500px; text-anchor: middle; fill: #e8782c; font-weight: 600; }
</style>
